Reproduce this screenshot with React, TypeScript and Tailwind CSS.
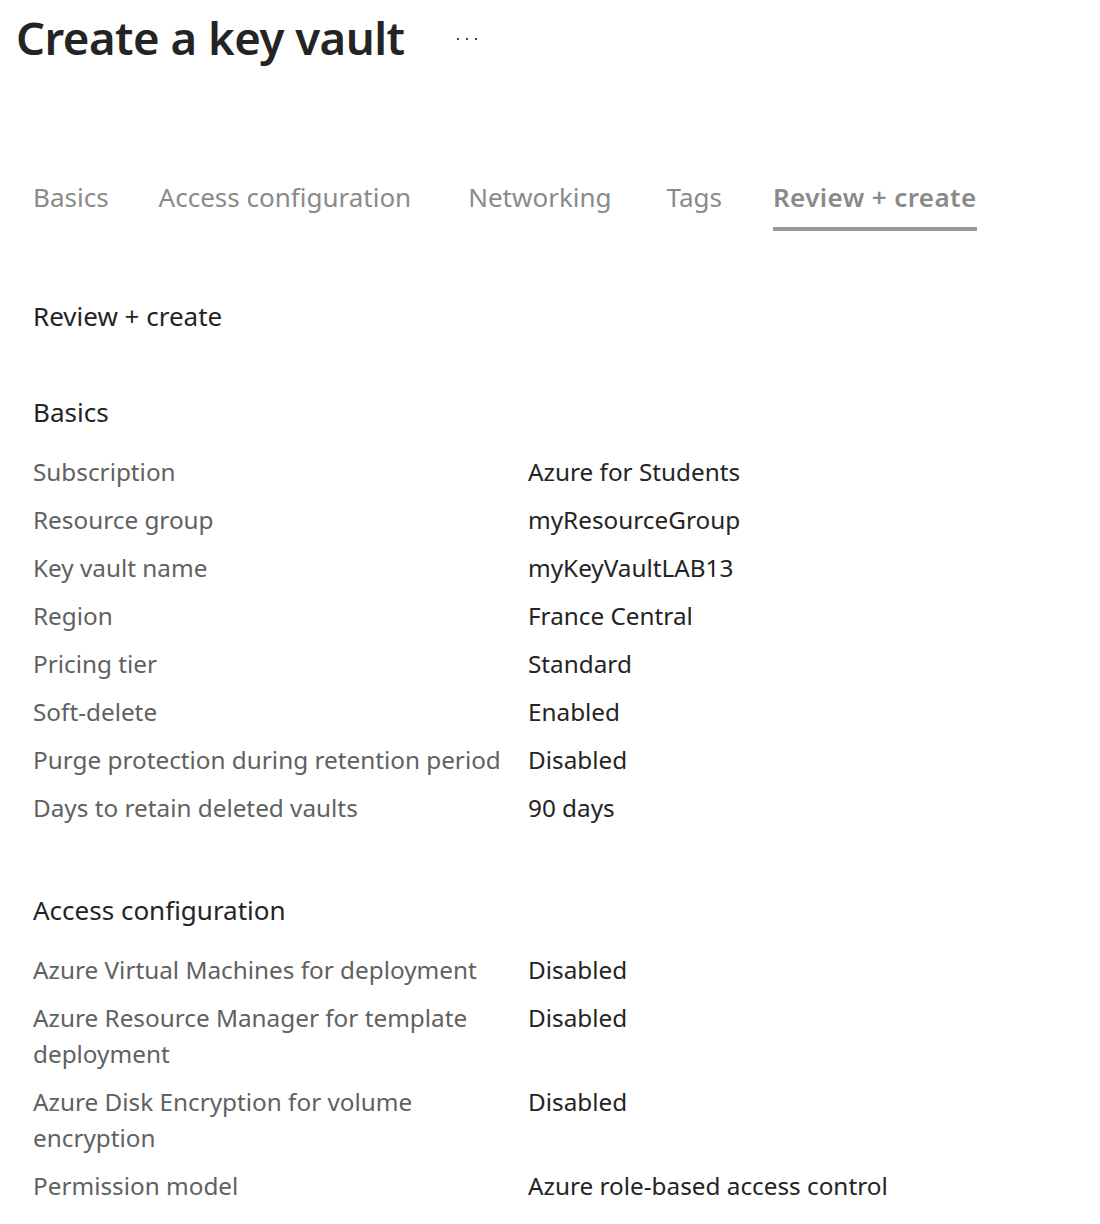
import React from 'react'

const basics: [string, string][] = [
  ['Subscription', 'Azure for Students'],
  ['Resource group', 'myResourceGroup'],
  ['Key vault name', 'myKeyVaultLAB13'],
  ['Region', 'France Central'],
  ['Pricing tier', 'Standard'],
  ['Soft-delete', 'Enabled'],
  ['Purge protection during retention period', 'Disabled'],
  ['Days to retain deleted vaults', '90 days'],
]

const access: [string, string][] = [
  ['Azure Virtual Machines for deployment', 'Disabled'],
  ['Azure Resource Manager for template deployment', 'Disabled'],
  ['Azure Disk Encryption for volume encryption', 'Disabled'],
  ['Permission model', 'Azure role-based access control'],
]

// left margins picked to line tabs up with the portal
const tabs = [
  { name: 'Basics', cls: '' },
  { name: 'Access configuration', cls: 'ml-[50px]' },
  { name: 'Networking', cls: 'ml-[57px]' },
  { name: 'Tags', cls: 'ml-[55px]' },
  { name: 'Review + create', cls: 'ml-[51px]' },
]

function Rows({ rows }: { rows: [string, string][] }) {
  return (
    <div className="flex flex-col gap-3">
      {rows.map(([k, v]) => (
        <div key={k} className="grid grid-cols-[495px_1fr] leading-[36px]">
          <div className="text-[#616161] pr-6">{k}</div>
          <div className="text-[#242424]">{v}</div>
        </div>
      ))}
    </div>
  )
}

export default function App() {
  return (
    <div className="w-[1100px] h-[1224px] bg-white overflow-hidden font-['Noto_Sans',sans-serif] text-[24.3px]">
      <div className="flex items-center pl-[16px] pt-[8px] h-[66px]">
        <h1 className="text-[45.5px] font-semibold text-[#242424] leading-[60px] tracking-[-0.5px]">Create a key vault</h1>
        <div className="flex gap-[7px] ml-[52px] mt-[4px]">
          <span className="w-[2px] h-[2px] bg-[#444]" />
          <span className="w-[2px] h-[2px] bg-[#444]" />
          <span className="w-[2px] h-[2px] bg-[#444]" />
        </div>
      </div>

      <div className="flex pl-[33px] mt-[111px] text-[#8a8a8a] text-[26px]">
        {tabs.map((t, i) => (
          <div key={t.name} className={`flex flex-col ${t.cls}`}>
            <span className={i === 4 ? 'font-semibold leading-[40px] tracking-[0.4px]' : 'leading-[40px]'}>{t.name}</span>
            <span className={i === 4 ? 'h-[4px] bg-[#9a9a9a] mt-[10px]' : 'h-[4px] mt-[10px]'} />
          </div>
        ))}
      </div>

      <div className="pl-[33px]">
        <div className="mt-[65px] text-[26px] text-[#242424] leading-[40px]">Review + create</div>

        <div className="mt-[56px] text-[26px] text-[#242424] leading-[40px]">Basics</div>
        <div className="mt-[22px]">
          <Rows rows={basics} />
        </div>

        <div className="mt-[64px] text-[26px] text-[#242424] leading-[40px]">Access configuration</div>
        <div className="mt-[22px] w-[1000px]">
          <Rows rows={access} />
        </div>
      </div>
    </div>
  )
}
